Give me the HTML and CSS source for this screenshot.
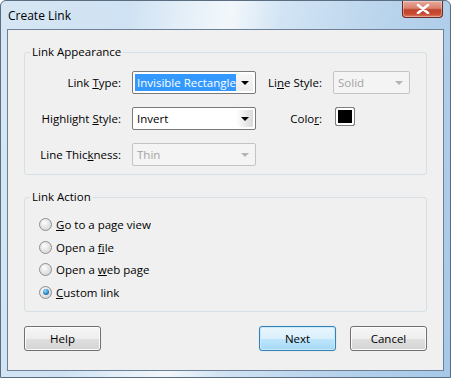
FILE: index.html
```html
<!DOCTYPE html>
<html>
<head>
<meta charset="utf-8">
<link rel="stylesheet" href="styles.css">
</head>
<body>
<div class="window">
  <div class="titlebar">
    <span class="title">Create Link</span>
    <div class="close"><svg width="14" height="10" viewBox="0 0 14 10"><path d="M2 1 L12 9 M12 1 L2 9" stroke="#fff" stroke-width="2.6" stroke-linecap="round"/></svg></div>
  </div>
  <div class="client">
    <fieldset class="group appearance">
      <legend>Link Appearance</legend>
      <div class="grid">
        <span class="lbl">Link <u>T</u>ype:</span>
        <div class="select"><span class="sel-text hl">Invisible Rectangle</span><span class="arrow"></span></div>
        <span class="lbl">Li<u>n</u>e Style:</span>
        <div class="select disabled"><span class="sel-text">Solid</span><span class="arrow"></span></div>

        <span class="lbl">Highlight <u>S</u>tyle:</span>
        <div class="select"><span class="sel-text">Invert</span><span class="arrow shaded"></span></div>
        <span class="lbl">Colo<u>r</u>:</span>
        <div class="swatch-cell"><span class="swatch"></span></div>

        <span class="lbl">Line Thic<u>k</u>ness:</span>
        <div class="select disabled"><span class="sel-text">Thin</span><span class="arrow"></span></div>
      </div>
    </fieldset>
    <fieldset class="group action">
      <legend>Link Action</legend>
      <div class="radios">
        <div class="radio-row"><span class="radio"></span><span><u>G</u>o to a page view</span></div>
        <div class="radio-row"><span class="radio"></span><span>Open a <u>f</u>ile</span></div>
        <div class="radio-row"><span class="radio"></span><span>Open a <u>w</u>eb page</span></div>
        <div class="radio-row"><span class="radio checked"></span><span><u>C</u>ustom link</span></div>
      </div>
    </fieldset>
    <div class="buttons">
      <div class="btn">Help</div>
      <div class="spacer"></div>
      <div class="btn default">Next</div>
      <div class="btn">Cancel</div>
    </div>
  </div>
</div>
</body>
</html>
```
FILE: styles.css
```css
* { box-sizing: border-box; }
html, body { margin: 0; padding: 0; background: #fff; }
body {
  font-family: "Segoe UI", "Open Sans", "Noto Sans", sans-serif;
  font-size: 11.5px;
  color: #000;
}
u { text-decoration: underline; text-underline-offset: 1px; }

.window {
  width: 451px;
  height: 378px;
  border-radius: 6px 6px 0 0;
  border: 1px solid #5b6d80;
  background:
    linear-gradient(100deg, #d6e6f4 0%, #cfe2f3 25%, #e8f1f9 38%, #f2f7fb 45%, #d2e4f4 55%, #b9d4ec 75%, #a6c8e8 100%);
  display: flex;
  flex-direction: column;
  padding: 0 6px 6px 6px;
}

.titlebar {
  height: 28px;
  display: flex;
  justify-content: space-between;
  align-items: flex-start;
}
.title {
  font-size: 12px;
  margin-top: 6px;
  margin-left: 1px;
  color: #000;
}
.close {
  width: 41px;
  height: 17px;
  margin-right: 1px;
  border: 1px solid #6b2a23;
  border-top: none;
  border-radius: 0 0 4px 4px;
  background: linear-gradient(#e9a99b 0%, #d9826f 45%, #c0432c 55%, #c74b32 80%, #dc7a5f 100%);
  box-shadow: inset 0 0 0 1px rgba(255,255,255,0.35);
  display: flex;
  align-items: center;
  justify-content: center;
}

.client {
  flex: 1;
  border: 1px solid #6d8095;
  background: #f0f0f0;
  padding: 0 16px;
  display: flex;
  flex-direction: column;
}

.group {
  margin: 0;
  border: 1px solid #d5dfe5;
  border-radius: 3px;
  padding: 0;
  min-width: 0;
}
.group legend {
  padding: 0 2px;
  margin-left: 5px;
  line-height: 16px;
  height: 16px;
}
.appearance { margin-top: 14px; }
.action { margin-top: 14px; }

.grid {
  display: grid;
  grid-template-columns: 96px 124px 55px 77px;
  grid-auto-rows: 23px;
  column-gap: 11px;
  row-gap: 13px;
  padding: 11px 0 8px 0;
  align-items: center;
}
.lbl { justify-self: end; white-space: nowrap; }

.select {
  height: 23px;
  border: 1px solid #7a7a7a;
  border-radius: 2px;
  background: #fff;
  display: flex;
  align-items: stretch;
  padding: 2px;
}
.sel-text {
  flex: 1;
  display: flex;
  align-items: center;
  padding-left: 2px;
  white-space: nowrap;
  overflow: hidden;
}
.sel-text.hl { background: #3399ff; color: #fff; flex: 0 0 auto; width: 101px; }
.select .arrow {
  width: 17px;
  margin-left: auto;
  position: relative;
  background: linear-gradient(#f7f7f7, #eaeaea);
}
.select .arrow.shaded { background: linear-gradient(90deg, #ffffff, #dadada); }
.select .arrow::after {
  content: "";
  position: absolute;
  left: 5px;
  top: 7px;
  border-left: 4px solid transparent;
  border-right: 4px solid transparent;
  border-top: 4px solid #000;
}
.select.disabled {
  border-color: #c4c4c4;
  background: #f4f4f4;
  color: #a3a3a3;
}
.select.disabled .arrow { background: transparent; }
.select.disabled .arrow::after { border-top-color: #b4b4b4; }

.swatch-cell { display: flex; align-items: flex-start; height: 23px; padding-left: 2px; }
.swatch {
  width: 20px;
  height: 19px;
  border: 1px solid #808080;
  border-radius: 2px;
  background: #000;
  box-shadow: inset 0 0 0 2px #fff;
}

.radios {
  display: flex;
  flex-direction: column;
  padding: 8px 0 7px 14px;
}
.radio-row {
  height: 22.7px;
  display: flex;
  align-items: center;
  gap: 4px;
}
.radio {
  width: 13px;
  height: 13px;
  border-radius: 50%;
  border: 1px solid #8e8f8f;
  background: radial-gradient(circle at 40% 35%, #ffffff 0%, #e8e8e8 40%, #cfcfcf 100%);
  position: relative;
}
.radio.checked::after {
  content: "";
  position: absolute;
  left: 2.5px;
  top: 2.5px;
  width: 6px;
  height: 6px;
  border-radius: 50%;
  background: radial-gradient(circle at 40% 35%, #9fe0f9 0%, #2f8ccf 50%, #0d4f84 100%);
}

.buttons {
  display: flex;
  margin-top: 14px;
  gap: 14px;
}
.spacer { flex: 1; }
.btn {
  width: 77px;
  height: 25px;
  border: 1px solid #707070;
  border-radius: 3px;
  background: linear-gradient(#f6f6f6 0%, #eeeeee 50%, #e0e0e0 50%, #d4d4d4 100%);
  box-shadow: inset 0 0 0 1px #fcfcfc;
  display: flex;
  align-items: center;
  justify-content: center;
}
.btn.default {
  border-color: #3c7fb1;
  background: linear-gradient(#eaf6fd 0%, #d9f0fc 50%, #bee6fd 50%, #a7d9f5 100%);
  box-shadow: inset 0 0 0 1px #c6eafd, 0 0 1px #6fc6f2;
}
```
